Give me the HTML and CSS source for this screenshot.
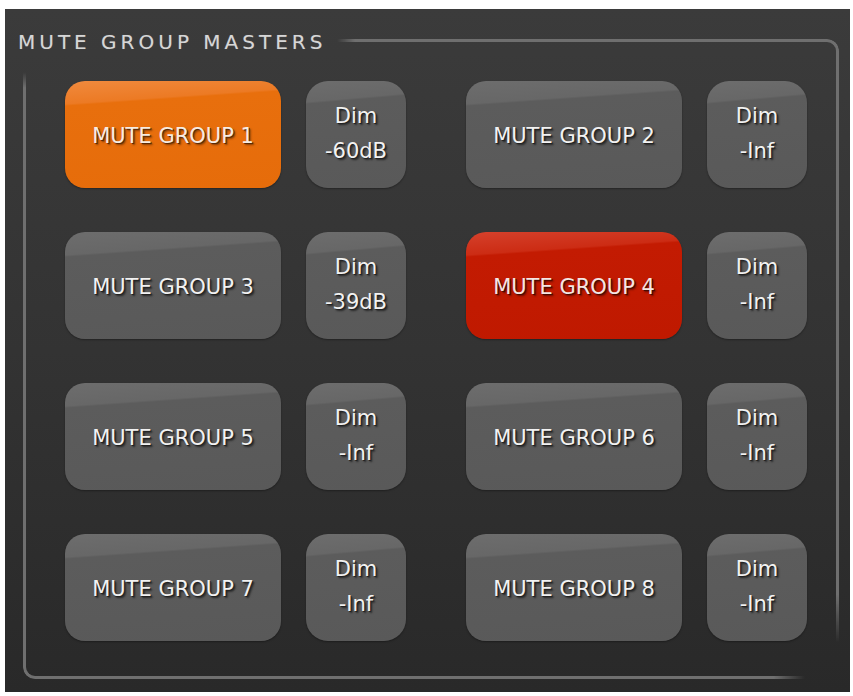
FILE: index.html
```html
<!DOCTYPE html>
<html lang="en">
<head>
<meta charset="utf-8">
<title>Mute Group Masters</title>
<link rel="stylesheet" href="styles.css">
</head>
<body>
<div class="panel">
  <div class="title">MUTE GROUP MASTERS</div>
  <div class="frame">
    <div class="grid">
      <div class="pair"><div class="btn mute on-orange"><span>MUTE GROUP 1</span></div><div class="btn dim"><span>Dim<br>-60dB</span></div></div>
      <div class="pair"><div class="btn mute"><span>MUTE GROUP 2</span></div><div class="btn dim"><span>Dim<br>-Inf</span></div></div>
      <div class="pair"><div class="btn mute"><span>MUTE GROUP 3</span></div><div class="btn dim"><span>Dim<br>-39dB</span></div></div>
      <div class="pair"><div class="btn mute on-red"><span>MUTE GROUP 4</span></div><div class="btn dim"><span>Dim<br>-Inf</span></div></div>
      <div class="pair"><div class="btn mute"><span>MUTE GROUP 5</span></div><div class="btn dim"><span>Dim<br>-Inf</span></div></div>
      <div class="pair"><div class="btn mute"><span>MUTE GROUP 6</span></div><div class="btn dim"><span>Dim<br>-Inf</span></div></div>
      <div class="pair"><div class="btn mute"><span>MUTE GROUP 7</span></div><div class="btn dim"><span>Dim<br>-Inf</span></div></div>
      <div class="pair"><div class="btn mute"><span>MUTE GROUP 8</span></div><div class="btn dim"><span>Dim<br>-Inf</span></div></div>
    </div>
  </div>
</div>
</body>
</html>
```
FILE: styles.css
```css
html, body {
  margin: 0;
  padding: 0;
  background: #ffffff;
}

.panel {
  margin: 9px 0 0 5px;
  width: 845px;
  height: 683px;
  background: linear-gradient(180deg, #3b3b3b 0%, #333333 50%, #292929 100%);
  display: grid;
  grid-template-columns: 1fr;
  grid-template-rows: 1fr;
  font-family: "DejaVu Sans", Verdana, sans-serif;
}

.title {
  grid-area: 1 / 1;
  align-self: start;
  justify-self: start;
  margin: 23px 0 0 13px;
  font-size: 20px;
  line-height: 20px;
  letter-spacing: 4px;
  color: #d6d6d6;
  text-shadow: 0 0 1px rgba(255, 255, 255, 0.25);
  position: relative;
  z-index: 1;
}

.frame {
  grid-area: 1 / 1;
  align-self: start;
  justify-self: start;
  margin: 30px 0 0 18px;
  width: 816px;
  height: 640px;
  box-sizing: border-box;
  padding: 42px 0 0 42px;
  position: relative;
}

.frame::before {
  content: "";
  position: absolute;
  top: 0;
  left: 314px;
  right: 0;
  bottom: 36px;
  border-top: 3px solid #6f6f6f;
  border-right: 3px solid #6f6f6f;
  border-top-right-radius: 12px;
  -webkit-mask-image: linear-gradient(90deg, transparent 0, #000 18px), linear-gradient(180deg, #000 92%, transparent 100%);
  -webkit-mask-composite: source-in;
  mask-image: linear-gradient(90deg, transparent 0, #000 18px), linear-gradient(180deg, #000 92%, transparent 100%);
  mask-composite: intersect;
}

.frame::after {
  content: "";
  position: absolute;
  top: 33px;
  left: 0;
  right: 34px;
  bottom: 0;
  border-left: 3px solid #6f6f6f;
  border-bottom: 3px solid #6f6f6f;
  border-bottom-left-radius: 12px;
  -webkit-mask-image: linear-gradient(180deg, transparent 0, #000 16px), linear-gradient(90deg, #000 96%, transparent 100%);
  -webkit-mask-composite: source-in;
  mask-image: linear-gradient(180deg, transparent 0, #000 16px), linear-gradient(90deg, #000 96%, transparent 100%);
  mask-composite: intersect;
}

.grid {
  display: grid;
  grid-template-columns: 341px 341px;
  grid-auto-rows: 107px;
  column-gap: 60px;
  row-gap: 44px;
}

.pair {
  display: flex;
  gap: 25px;
}

.btn {
  height: 107px;
  display: flex;
  align-items: center;
  justify-content: center;
  text-align: center;
  color: #f2f2f2;
  font-size: 21px;
  text-shadow: 1px 1px 0 #222222, 2px 2px 2px rgba(0, 0, 0, 0.6);
  box-shadow: 0 1px 2px rgba(0, 0, 0, 0.35);
  box-sizing: border-box;
}

.mute {
  width: 216px;
  border-radius: 20px;
  line-height: 21px;
  padding-top: 4px;
  background: linear-gradient(176deg, #6d6d6d 0, #676767 23px, #5c5c5c 25px, #595959 100%);
}

.dim {
  width: 100px;
  border-radius: 22px;
  line-height: 35px;
  padding-bottom: 1px;
  background: linear-gradient(175deg, #6d6d6d 0, #676767 21px, #5c5c5c 23px, #595959 100%);
}

.on-orange {
  background: linear-gradient(176deg, #f08a3e 0, #ec7a24 23px, #e86f0d 25px, #e66c0a 100%);
  color: #f6ece2;
  text-shadow: 1px 1px 0 #5a2a05, 2px 2px 2px rgba(60, 25, 0, 0.6);
}

.on-red {
  background: linear-gradient(176deg, #d5412c 0, #cc2c14 23px, #c31b02 25px, #bf1900 100%);
  color: #f4e6e4;
  text-shadow: 1px 1px 0 #4a0a00, 2px 2px 2px rgba(40, 0, 0, 0.6);
}
```
